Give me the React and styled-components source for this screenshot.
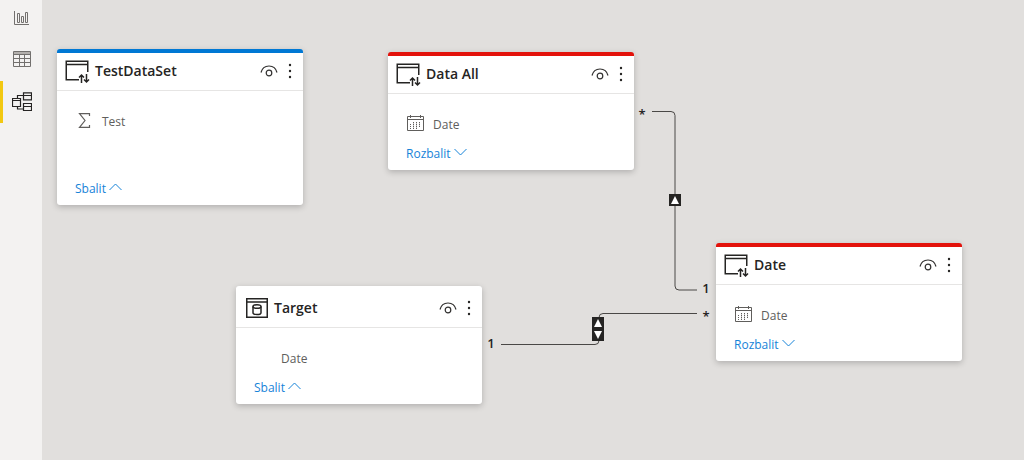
import React from 'react'
import styled, { createGlobalStyle } from 'styled-components';

const GlobalStyle = createGlobalStyle`
  * {
    box-sizing: border-box;
  }
  body {
    margin: 0;
    font-family: 'Open Sans', 'Noto Sans', sans-serif;
    color: #323130;
    background-color: #e1dfdd;
  }
  button {
    padding: 0;
    border: 0;
    background: none;
    font: inherit;
    color: inherit;
    cursor: pointer;
  }
  svg {
    display: block;
  }
`;

const Page = styled.div`
  display: flex;
  min-height: 100vh;
`;

const Sidebar = styled.nav`
  display: flex;
  flex-direction: column;
  flex: 0 0 42px;
  gap: 6px;
  background-color: #f3f2f1;
`;

const ViewButton = styled.button`
  position: relative;
  display: flex;
  align-items: center;
  justify-content: center;
  height: 36px;
  padding-left: 2px;
  color: ${({ $active }) => ($active ? '#252423' : '#72706e')};

  &::before {
    content: '';
    position: absolute;
    left: 0;
    top: -3px;
    bottom: -3px;
    width: 3px;
    background-color: ${({ $active }) => ($active ? '#f2c811' : 'transparent')};
  }
`;

const Canvas = styled.main`
  position: relative;
  flex: 1;
  overflow: hidden;
`;

const Card = styled.section`
  position: absolute;
  left: ${({ $x }) => $x}px;
  top: ${({ $y }) => $y}px;
  width: 246px;
  border-top: 4px solid ${({ $accent }) => $accent};
  border-radius: 3px;
  background-color: white;
  box-shadow: 0 2px 6px rgba(0, 0, 0, 0.22);
`;

const CardHeader = styled.header`
  display: flex;
  align-items: center;
  height: 38px;
  padding: 0 9px 2px 8px;
  border-bottom: 1px solid #e6e5e4;
`;

const Title = styled.h2`
  flex: 1;
  margin: 0 0 0 5px;
  font-size: 14px;
  font-weight: 600;
  line-height: 20px;
  color: #252423;
`;

const IconButton = styled.button`
  display: flex;
  margin-left: 8px;
`;

const Fields = styled.ul`
  list-style: none;
  margin: 0;
  padding: 15px 18px 0;
  min-height: ${({ $tall }) => ($tall ? 86 : 48)}px;
`;

const Field = styled.li`
  display: flex;
  align-items: center;
  height: 30px;
  font-size: 12px;
  color: #605e5c;
`;

const FieldIcon = styled.span`
  flex: 0 0 27px;
`;

const Toggle = styled.button`
  display: flex;
  align-items: center;
  gap: 3px;
  height: 22px;
  margin: 0 18px 6px;
  font-size: 12px;
  color: #1683d8;
`;

const Links = styled.svg`
  position: absolute;
  left: 0;
  top: 0;
  width: 100%;
  height: 100%;
`;

const Line = styled.path`
  fill: none;
  stroke: #4a4846;
  stroke-width: 1;
`;

const Cardinality = styled.text`
  font-size: 13px;
  font-weight: 600;
  text-anchor: middle;
  fill: #252423;
`;

const ReportIcon = () => (
  <svg width="16" height="16" viewBox="0 0 16 16" fill="none" stroke="currentColor">
    <path d="M.5 1v13.500H15" />
    <path d="M3.500 3.500h2v9h-2zM7.500 6.500h2v6h-2zM11.500 2.500h2v10h-2z" />
  </svg>
)

const TableIcon = () => (
  <svg width="18" height="18" viewBox="0 0 18 18" fill="none" stroke="currentColor">
    <path d="M.5 .5h17v15H.5z" />
    <path d="M1 1h16v3H1z" fill="#b3b0ad" stroke="none" />
    <path d="M.5 3.500h17M.5 7.500h17M.5 11.500h17M6.500 3v12M11.500 3v12" />
  </svg>
)

const ModelIcon = () => (
  <svg width="20" height="20" viewBox="0 0 20 20" fill="none" stroke="currentColor" strokeWidth="1.200">
    <path d="M.5 6.500h8v8h-8zM.5 8.500h8" />
    <path d="M11.500 .8h8v7h-8zM11.500 3.500h8M11.500 11.500h8v7h-8zM11.500 14.500h8" />
    <path d="M5.500 6V3.500h6M5.500 15v2h6" />
  </svg>
)

const DirectTableIcon = () => (
  <svg width="25" height="27" viewBox="0 0 25 27" fill="none" stroke="#252423" strokeWidth="1.500">
    <path d="M14 22.750H1.250V4.250h21.500V15M1.250 7.500h21.500" />
    <path d="M16.500 26v-8M14 20.500l2.500-2.500 2.500 2.500M21.500 17v8M19 22.500l2.500 2.500 2.500-2.500" />
  </svg>
)

const ImportTableIcon = () => (
  <svg width="25" height="27" viewBox="0 0 25 27" fill="none" stroke="#252423" strokeWidth="1.500">
    <path d="M2.750 4.750h20.500v18.500H2.750zM2.750 8h20.500" />
    <ellipse cx="13" cy="12.500" rx="4" ry="1.800" />
    <path d="M9 12.500v6.200c0 2.400 8 2.400 8 0v-6.200" />
  </svg>
)

const EyeIcon = () => (
  <svg width="18" height="14" viewBox="0 0 18 14" fill="none" stroke="#323130" strokeWidth="1.200">
    <path d="M1 8.500C2 4.500 5 2 9 2s7 2.500 8 6.500" />
    <circle cx="9" cy="9" r="2.800" />
  </svg>
)

const MoreIcon = () => (
  <svg width="8" height="18" viewBox="0 0 8 18" fill="#252423">
    <circle cx="4" cy="3" r="1.200" />
    <circle cx="4" cy="9" r="1.200" />
    <circle cx="4" cy="15" r="1.200" />
  </svg>
)

const SigmaIcon = () => (
  <svg width="18" height="18" viewBox="0 0 18 18" fill="none" stroke="#605e5c" strokeWidth="1.200">
    <path d="M14.500 4V1.600H4.500L10 8.500 4.500 15.400h10V13" />
  </svg>
)

const CalendarIcon = () => (
  <svg width="20" height="18" viewBox="0 0 20 18" fill="none" stroke="#605e5c">
    <path d="M1.500 1.500h16v14h-16zM1.500 4.500h16M4.500 0v3M14.500 0v3" />
    <path d="M7 7.500h8M4 9.500h11M4 11.500h11M4 13.500h8" strokeDasharray="1 2" />
    <path d="M7.500 7v7M10.500 7v7M13.500 7v5" strokeOpacity=".35" />
  </svg>
)

const Chevron = ({ up }) => (
  <svg width="13" height="11" viewBox="0 0 13 11" fill="none" stroke="currentColor">
    <path d={up ? 'M.5 7l6-6 6 6' : 'M.5 1l6 6 6-6'} />
  </svg>
)

const fieldIcons = {
  sum: SigmaIcon,
  date: CalendarIcon,
};

const tables = [
  { id: 'test', name: 'TestDataSet', x: 15, y: 49, accent: '#0078d4', field: 'Test', type: 'sum', open: true, tall: true },
  { id: 'all', name: 'Data All', x: 346, y: 52, accent: '#e3120b', field: 'Date', type: 'date' },
  { id: 'target', name: 'Target', x: 194, y: 286, accent: 'white', field: 'Date', open: true, imported: true },
  { id: 'date', name: 'Date', x: 674, y: 243, accent: '#e3120b', field: 'Date', type: 'date' },
];

const TableCard = ({ table }) => {
  const Icon = fieldIcons[table.type];
  return (
    <Card $x={table.x} $y={table.y} $accent={table.accent}>
      <CardHeader>
        {table.imported ? <ImportTableIcon /> : <DirectTableIcon />}
        <Title>{table.name}</Title>
        <IconButton aria-label="Zobrazit"><EyeIcon /></IconButton>
        <IconButton aria-label="Možnosti"><MoreIcon /></IconButton>
      </CardHeader>
      <Fields $tall={table.tall}>
        <Field>
          <FieldIcon>{Icon ? <Icon /> : null}</FieldIcon>
          {table.field}
        </Field>
      </Fields>
      <Toggle aria-expanded={Boolean(table.open)}>
        {table.open ? 'Sbalit' : 'Rozbalit'}
        <Chevron up={table.open} />
      </Toggle>
    </Card>
  )
}

const Relationships = () => (
  <Links>
    <Line d="M610 111.500h19q4 0 4 4v170.500q0 4 4 4h18" />
    <Line d="M459 344.500h94q4 0 4-4v-23q0-4 4-4h94" />
    <rect x="627" y="194" width="12" height="12" fill="#252423" />
    <path d="M633 196l4 8h-8z" fill="white" />
    <rect x="550" y="317" width="12" height="24" fill="#252423" />
    <path d="M556 319l4 8h-8zM556 339l4-8h-8z" fill="white" />
    <Cardinality x="600" y="119">*</Cardinality>
    <Cardinality x="664" y="293">1</Cardinality>
    <Cardinality x="664" y="321">*</Cardinality>
    <Cardinality x="449" y="348">1</Cardinality>
  </Links>
)

const App = () => {
  return (
    <Page>
      <GlobalStyle />
      <Sidebar>
        <ViewButton aria-label="Sestava"><ReportIcon /></ViewButton>
        <ViewButton aria-label="Data"><TableIcon /></ViewButton>
        <ViewButton aria-label="Model" $active><ModelIcon /></ViewButton>
      </Sidebar>
      <Canvas>
        <Relationships />
        {tables.map(table => <TableCard key={table.id} table={table} />)}
      </Canvas>
    </Page>
  )
}

export default App
